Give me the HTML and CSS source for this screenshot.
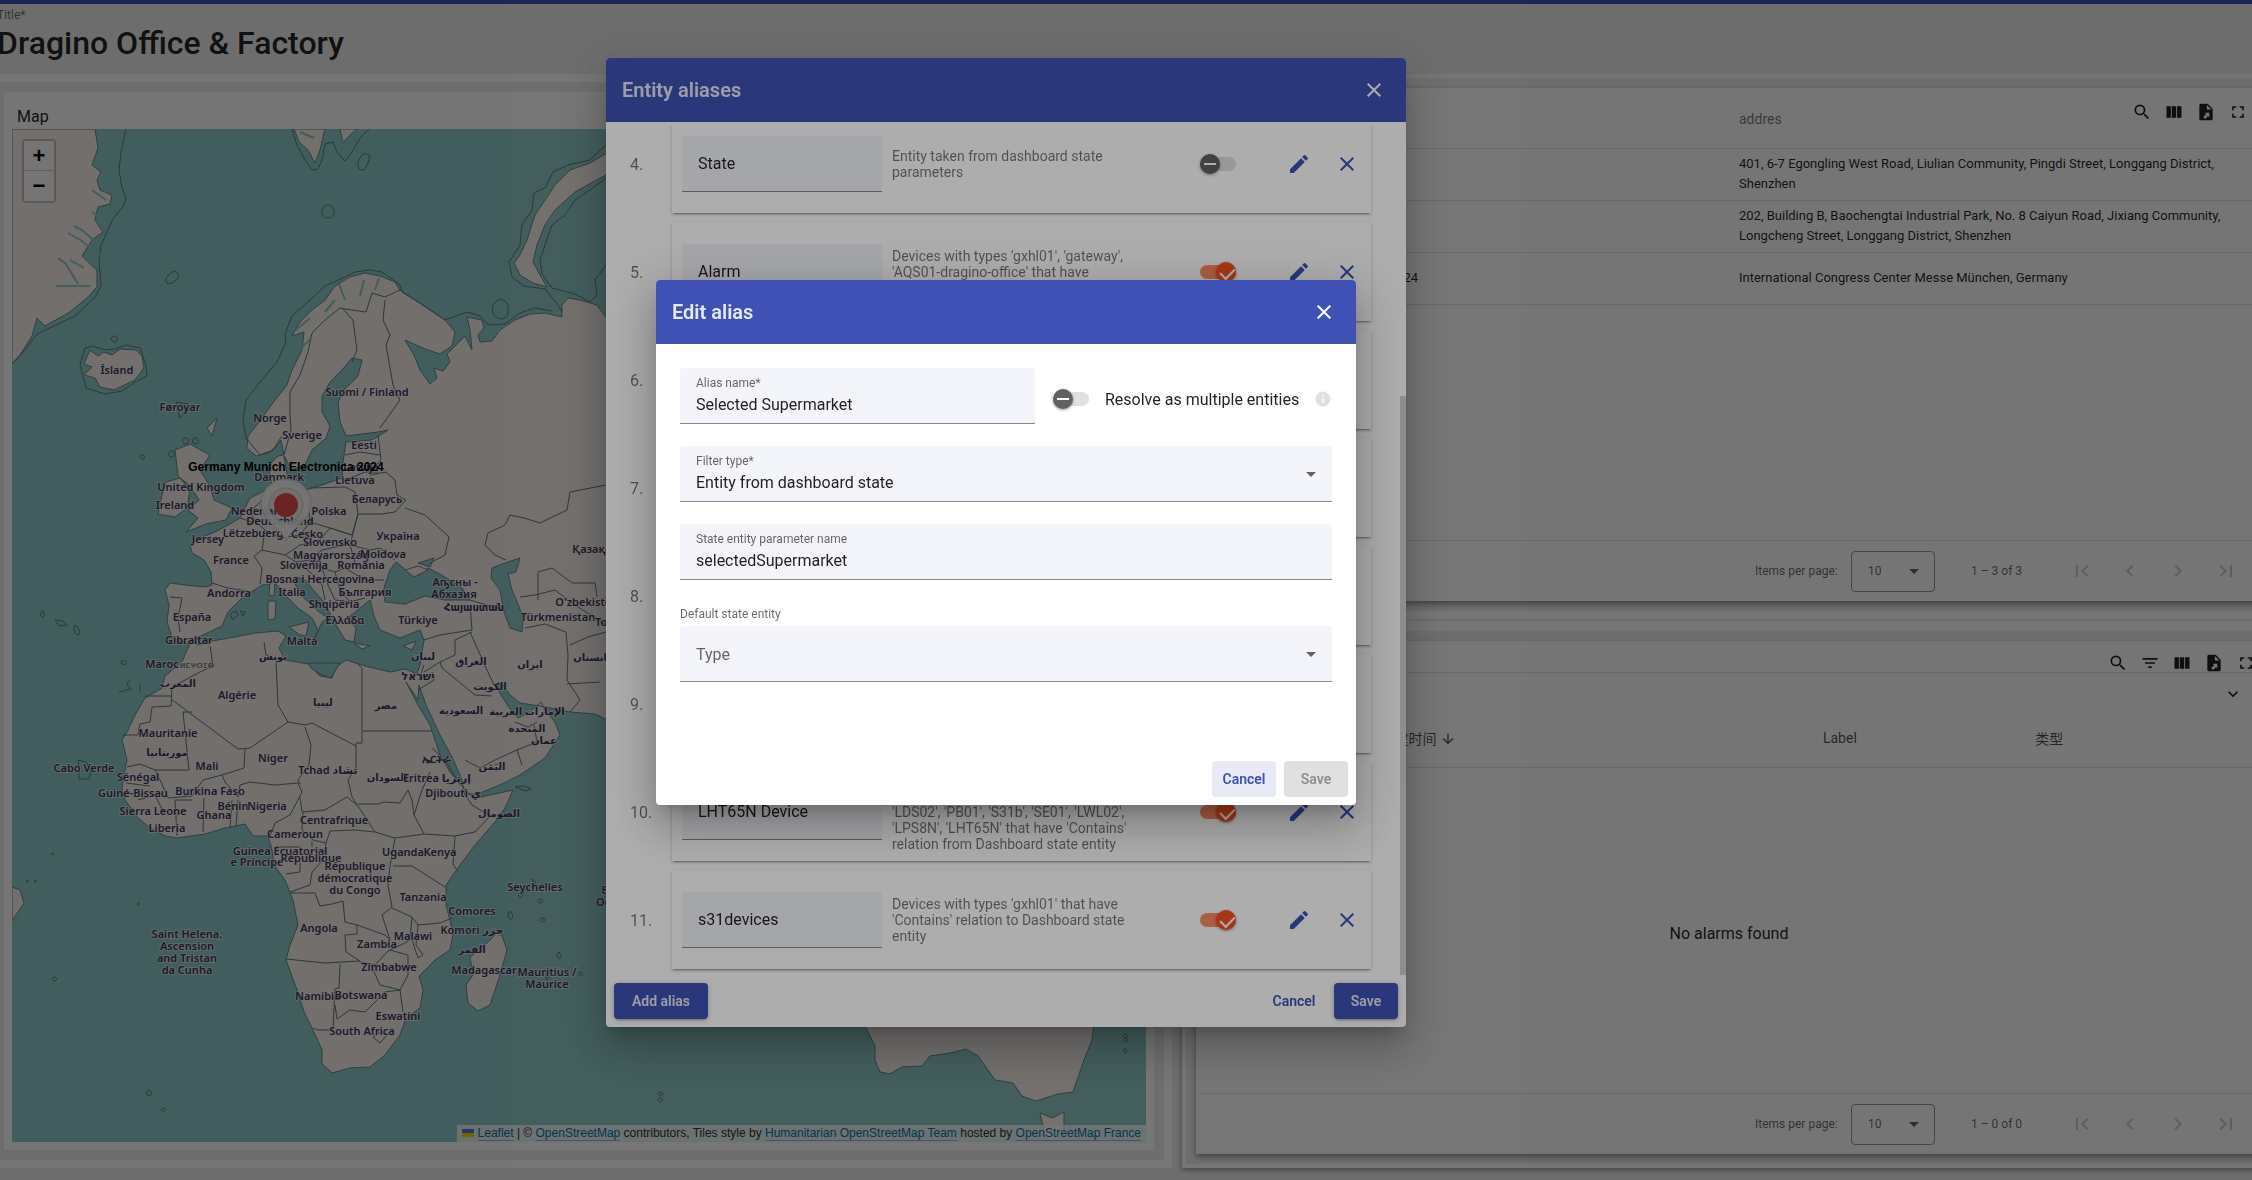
FILE: index.html
```html
<!DOCTYPE html>
<html lang="en">
<head>
<meta charset="utf-8">
<title>Dragino Office &amp; Factory</title>
<link rel="stylesheet" href="styles.css">
</head>
<body>
<svg class="sprite" aria-hidden="true">
  <symbol id="i-close" viewBox="0 0 24 24"><path d="M19 6.41 17.59 5 12 10.59 6.41 5 5 6.41 10.59 12 5 17.59 6.41 19 12 13.41 17.59 19 19 17.59 13.41 12z"/></symbol>
  <symbol id="i-edit" viewBox="0 0 24 24"><path d="M3 17.25V21h3.75L17.81 9.94l-3.75-3.75L3 17.25zM20.71 7.04a1 1 0 0 0 0-1.41l-2.34-2.34a1 1 0 0 0-1.41 0l-1.83 1.83 3.75 3.75 1.83-1.83z"/></symbol>
  <symbol id="i-search" viewBox="0 0 24 24"><path d="M15.5 14h-.79l-.28-.27A6.47 6.47 0 0 0 16 9.5 6.5 6.5 0 1 0 9.5 16c1.61 0 3.09-.59 4.23-1.57l.27.28v.79l5 4.99L20.49 19l-4.99-5zm-6 0a4.5 4.5 0 1 1 0-9 4.5 4.5 0 0 1 0 9z"/></symbol>
  <symbol id="i-columns" viewBox="0 0 24 24"><path d="M3 5h5.3v14H3zM9.3 5h5.3v14H9.3zM15.700 5H21v14h-5.300z"/></symbol>
  <symbol id="i-export" viewBox="0 0 24 24"><path d="M14 2H6c-1.100 0-2 .9-2 2v16c0 1.100.9 2 2 2h12c1.100 0 2-.9 2-2V8l-6-6zm-1 7V3.500L18.500 9H13zm3 9.500-1.600-1.600L11 20.300 8.700 18l3.400-3.400L10.500 13H16v5.500z"/></symbol>
  <symbol id="i-full" viewBox="0 0 24 24"><path d="M7 14H5v5h5v-2H7v-3zm-2-4h2V7h3V5H5v5zm12 7h-3v2h5v-5h-2v3zM14 5v2h3v3h2V5h-5z"/></symbol>
  <symbol id="i-filter" viewBox="0 0 24 24"><path d="M10 18h4v-2h-4v2zM3 6v2h18V6H3zm3 7h12v-2H6v2z"/></symbol>
  <symbol id="i-down" viewBox="0 0 24 24"><path d="M7.41 8.59 12 13.170l4.590-4.580L18 10l-6 6-6-6z"/></symbol>
  <symbol id="i-arrow" viewBox="0 0 24 24"><path d="m20 12-1.410-1.410L13 16.170V4h-2v12.170l-5.580-5.590L4 12l8 8z"/></symbol>
  <symbol id="i-caret" viewBox="0 0 10 5"><path d="M0 0h10L5 5z"/></symbol>
  <symbol id="i-first" viewBox="0 0 24 24"><path d="M18.410 16.590 13.820 12l4.590-4.590L17 6l-6 6 6 6zM6 6h2v12H6z"/></symbol>
  <symbol id="i-prev" viewBox="0 0 24 24"><path d="M15.410 7.410 14 6l-6 6 6 6 1.410-1.410L10.830 12z"/></symbol>
  <symbol id="i-next" viewBox="0 0 24 24"><path d="M10 6 8.590 7.410 13.170 12l-4.580 4.590L10 18l6-6z"/></symbol>
  <symbol id="i-last" viewBox="0 0 24 24"><path d="M5.590 7.410 10.180 12l-4.590 4.590L7 18l6-6-6-6zM16 6h2v12h-2z"/></symbol>
  <symbol id="i-info" viewBox="0 0 24 24"><path d="M12 2a10 10 0 1 0 0 20 10 10 0 0 0 0-20zm1 15h-2v-6h2v6zm0-8h-2V7h2v2z"/></symbol>
</svg>

<header class="page-head">
  <span class="page-hint">Title*</span>
  <h1>Dragino Office &amp; Factory</h1>
</header>

<main class="dashboard">
  <section class="widget widget-map">
    <div class="card map-card">
      <h2>Map</h2>
      <div class="map">
        <svg class="map-canvas" viewBox="12 129 1134 1013" preserveAspectRatio="xMinYMin slice">
          <g class="land">
            <path d="M12 129H95L98 148 92 165 101 172 97 180 100 190 112 195 110 204 98 207 95 220 103 232 92 240 82 256 97 270 97 287 88 297 70 312 45 326 37 318 32 336 20 355 12 364z"/>
            <path d="M294 129 299 142 308 150 315 163 320 150 325 129zM340 129 343 143 350 135 357 129z"/>
            <path d="M84 364 90 350 98 356 104 352 112 355 120 349 136 350 142 356 144 368 135 380 114 390 100 387 95 378 84 375 92 367z"/>
            <path d="M615 148 590 163 570 170 555 185 545 200 535 215 527 240 520 255 514 263 520 275 533 283 547 287 540 275 533 262 537 245 545 225 555 210 575 192 615 170z"/>
            <path d="M615 330 597 305 580 300 568 298 562 305 562 317 545 313 530 314 515 320 500 330 492 341 480 342 478 335 484 328 482 320 467 317 470 330 472 350 465 336 456 345 447 354 450 362 443 371 434 368 437 378 430 384 420 370 414 355 405 340 425 349 440 354 452 346 455 332 445 320 430 310 412 298 400 290 395 282 380 276 365 273 350 277 335 286 325 300 312 310 300 322 292 336 304 332 302 350 292 370 287 385 275 400 262 418 248 436 247 448 256 456 268 453 275 448 281 440 284 455 278 456 268 466 272 485 262 492 250 498 240 518 230 524 215 532 200 538 190 545 192 553 204 560 211 572 212 585 206 587 185 585 170 583 165 590 169 605 167 622 172 637 180 641 190 644 187 650 182 662 165 676 162 688 145 698 135 715 128 730 122 740 127 760 124 775 122 788 125 800 138 818 150 828 165 836 177 838 205 834 225 828 245 824 253 836 268 836 272 850 274 865 285 880 293 900 298 925 290 945 286 960 297 990 304 1012 313 1030 322 1050 322 1064 332 1073 350 1068 370 1067 385 1055 400 1035 406 1018 420 1008 423 990 419 976 435 960 450 950 453 935 450 920 446 905 446 885 460 865 475 845 495 822 505 808 513 790 490 795 475 798 465 790 450 772 440 755 430 725 418 705 406 682 418 700 419 685 426 705 440 735 452 757 462 780 465 795 480 793 500 785 520 775 545 758 560 735 555 722 545 710 541 702 530 712 518 718 508 706 498 690 494 685 502 684 510 695 520 703 540 706 570 712 595 714 615 724z"/>
            <path d="M175 450 190 444 210 455 200 470 210 486 214 500 232 508 226 520 206 524 186 532 198 518 188 510 199 500 190 486 178 476zM162 495 166 482 180 478 190 490 187 508 175 517 158 514zM207 428 217 418 212 436z"/>
            <path d="M500 930 507 950 500 975 490 1005 478 1011 468 1003 466 985 473 975 470 957 485 945zM12 887 20 890 24 903 12 921z"/>
            <path d="M860 1015 867 1030 875 1046 875 1060 880 1072 890 1074 902 1067 922 1066 930 1056 950 1053 966 1049 978 1056 988 1070 995 1080 1013 1083 1022 1096 1036 1101 1058 1094 1073 1092 1084 1060 1092 1040 1095 1015zM1040 1113 1052 1118 1064 1112 1064 1135 1055 1142 1046 1140z"/>
          </g>
          <g class="water">
            <path d="M190 641 205 634 222 626 228 612 242 598 262 585 276 584 284 594 298 608 312 618 318 630 314 640 322 622 328 618 318 611 303 597 295 584 297 577 305 580 315 592 325 603 332 618 338 628 345 640 354 642 356 628 348 618 360 608 370 600 374 616 380 630 400 638 420 630 424 640 420 665 417 674 405 669 390 672 365 666 346 660 335 668 332 678 320 676 308 664 285 660 279 648 286 636 278 631 255 633 235 637 212 641 198 645z"/>
            <path d="M384 588 390 570 396 562 408 572 418 576 428 568 440 574 462 588 470 600 445 600 425 596 405 604 385 602zM418 563 434 558 430 567z"/>
            <path d="M520 558 505 563 492 568 491 578 500 590 504 612 510 628 522 632 523 618 518 604 512 590 508 574 516 572z"/>
            <path d="M284 456 292 470 305 465 312 450 326 438 330 426 322 412 322 396 330 382 342 370 352 358 362 360 358 376 344 390 338 402 340 422 346 436 378 432 388 430 372 440 346 442 343 462 342 478 325 484 305 490 288 480z"/>
            <path d="M308 663H340L334 673 330 678 320 674 312 669z"/>
          </g>
          <g class="land">
            <path d="M268 601 276 601 275 619 268 620zM270 583 275 582 274 596 269 595zM289 627 309 622 306 636 300 635zM354 643 370 646 362 649zM403 646 416 641 412 650zM405 570 418 566 428 570 414 577z"/>
          </g>
          <g class="border">
            <path d="M126 129 121 152 119 170 122 188 126 197 124 205 113 219 101 245 99 260 101 286 95 297 75 316 37 334 24 351 12 364"/>
            <path d="M292 129 297 145 305 160 312 170 318 169 322 160 325 144 333 142 337 152 345 161 352 152 360 138 369 129M363 154q9-1 6 6-4 14-10 9-4-6 4-15zM328 205c8 0 8 13 0 13s-8-13 0-13zM174 271q6 2 4 7-8 9-12 4-2-5 8-11z"/>
            <path d="M80 365 85 348 92 346 105 350 115 349 126 345 140 348 146 365 147 376 135 382 122 391 105 394 86 388zM114 336a3 3 0 1 0 1 0zM176 402 188 404 184 414 180 418z"/>
            <path d="M606 145 590 160 568 165 553 172 545 188 534 193 532 210 522 225 520 245 509 262 512 277 524 286 545 289 558 305 562 312M606 178 590 190 575 200 565 215 552 225 545 245 540 260 542 274 552 288 575 294 590 302 597 295 595 280 606 265M493 305q8-12 15 0 2 14-7 14-11-2-8-14z"/>
            <path d="M246 400 243 420 246 438 260 455 273 450 282 436M246 400 260 382 277 362 286 342 285 334 292 316 310 300 325 286 345 277 355 272 370 270 382 272 400 285 402 292 420 303 445 320 467 312 480 316 488 325 505 324 520 313 535 308 552 311"/>
            <path d="M400 290 385 297 372 293 366 312 345 309 340 308 325 320 312 333 308 352 300 375 290 392 290 415 291 430 284 455M342 308 353 320 357 350 352 362M385 300 383 320 390 335 386 345 393 385 400 400 380 428"/>
            <path d="M345 455 360 452 380 455M378 435 381 460 370 472 352 466M346 480 365 472 378 472M370 475 386 472 395 480 397 495 406 500 395 512 382 514 358 514M310 488 345 487 355 492 358 514 352 535 330 528 310 522 308 500M358 514 350 545 370 550 380 548 395 560M405 508 425 515 436 525 449 537 445 555 430 563M606 485 570 492 567 510 540 523 524 518 510 515 505 525 488 533 485 545 495 555 506 560"/>
            <path d="M262 500 250 512 256 522 265 530 262 550 254 556 262 568 260 584M240 518 252 522M265 530 280 538 300 535 310 522M262 550 285 555 300 545 320 540 330 528 352 535M285 555 296 562 310 560 322 550 345 545M296 562 310 572 322 585 325 600M310 560 322 568 335 572 345 568 365 580 384 580M322 568 328 585 335 600 350 602 365 598M335 572 340 590 350 602M350 545 355 562 345 568M212 583 228 588 247 591M170 597 182 598 178 618 180 632"/>
            <path d="M462 590 470 600 490 606 505 610M470 605 472 630 440 635 424 640M470 632 478 650 486 668 494 685M472 632 455 640 455 655 440 662 424 672M440 662 442 668 475 695 492 696M419 680 424 665M418 690 434 680 432 672M465 760 480 768 495 760 517 750 537 742 534 725M517 750 522 765M515 722 528 727 537 722M538 600 538 572 552 568 572 583 595 583 597 597M520 597 535 595 555 590 575 605 606 625M525 628 545 624 566 632 568 655 567 680 580 700 570 712M567 684 600 682M570 645 588 637 606 632"/>
            <path d="M210 646 213 666 200 672 172 687 171 706 152 707 150 722 140 724 138 735H122M145 696H171M171 699 238 749 250 748 288 722 278 705 276 660 266 655 264 642M192 712H183L189 770H155L140 764 127 767M288 722 305 725 312 723 356 746V743H362V668L358 664M363 731H432M305 727 311 745 309 765 298 780 300 784M245 749 244 768 222 775 203 780 192 796 168 798 162 784 155 770M126 783 150 786M138 800 155 795 165 815"/>
            <path d="M356 746 356 768 348 780 352 797 358 806M222 775 225 782 238 797 240 785 250 782 275 785 298 783 302 792 290 815 275 823 270 836M232 800 230 828M238 800 236 826M204 798 203 832M192 800 175 800 177 836M300 797 302 812 325 810 347 797 358 806 375 832 355 830 330 831 326 843 313 840 302 830 303 812M358 804H378L384 802 400 803 408 790 412 800 414 815 424 834 395 838 375 832M430 772 422 790 414 815M462 790 472 805 490 816 475 832 455 836 424 834M455 836 453 864 458 872M393 866H412L445 887M395 838 390 866M432 748 445 760 460 785"/>
            <path d="M275 847H300M312 841V847M326 843 323 860 312 872 310 885 290 892M300 862 300 872 286 874M290 893H315L320 906 332 904 343 901 345 922 357 925 385 935 390 940 382 915 392 907 388 885 390 866M286 959 325 963 360 961 346 952 345 935 357 934V925M360 962 375 965 388 951 405 943 410 940 412 917 392 908M418 925 440 923 452 918M412 917 418 925 416 945 423 955 418 958 412 940M340 964 339 988 335 989 333 1030 318 1030 313 1028M335 1005 337 1019 350 1010 365 1012 385 992 400 990 403 1012M370 963 380 985 400 990 408 975 408 955 390 950M373 1037 380 1043 387 1035 380 1032z"/>
            <path d="M43 611q3 6-1 6-3-4 1-6zM55 620l8 1 4 4-8 1zM75 625q8 7 3 10-6-3-3-10zM122 660q8 2 3 5l-4-2zM130 680l-3 4 4 5-12 3M140 684v8M78 760l8 2 5 9-2 8h-10v-12zM148 1090q6 1 2 6-6-1-2-6zM163 1108a2 2 0 1 0 1 0zM52 853a1 1 0 1 0 1 0zM138 903a1 1 0 1 0 1 0zM27 880a1 1 0 1 0 1 0zM35 880a1 1 0 1 0 1 0zM54 977a2 2 0 1 0 1 0zM142 455a2 2 0 1 0 1 0zM185 438a3 3 0 1 0 1 0zM195 438a3 3 0 1 0 1 0zM171 451a3 3 0 1 0 1 0zM510 911q6 8 0 8-4-4 0-8zM532 879q6 4 2 6zM520 893a2 2 0 1 0 1 0zM540 899a2 2 0 1 0 1 0zM542 918a2 2 0 1 0 1 0zM559 952q4 5 0 7-4-3 0-7zM580 972a2 2 0 1 0 1 0zM547 974q4 6-1 5zM515 787l10-1 6 3-6 2zM230 614l6-3 2 4-5 5zM240 611l5 1-2 4z"/>
            <path d="M660 1092a2 2 0 1 0 1 0zM660 1098a2 2 0 1 0 1 0zM1125 1034a2 2 0 1 0 1 0zM1125 1038a2 2 0 1 0 1 0zM1125 1048q4 3 0 5-3-2 0-5z"/>
          </g>
          <path class="inlet" d="M65 360l12-28M78 284l-12-20-8-6M90 286l-20 0-14 0M84 268l-14-8M100 255l-18-14-14-8M98 244l-16-14-8-4M104 220l-12-8M106 200l-14-10M296 330l14-12M310 340l-14 12M325 312l10-12M345 300l-6-16M360 296l4-16M375 290l4-12M300 132l14 6"/>
          <g class="places" text-anchor="middle">
            <text x="117" y="374">Ísland</text><text x="180" y="411">Føroyar</text><text x="270" y="422">Norge</text><text x="302" y="439">Sverige</text><text x="367" y="396">Suomi / Finland</text><text x="364" y="449">Eesti</text><text x="361" y="471">Latvija</text><text x="355" y="484">Lietuva</text><text x="279" y="481">Danmark</text><text x="201" y="491">United Kingdom</text><text x="175" y="509">Ireland</text><text x="377" y="503">Беларусь</text><text x="329" y="515">Polska</text><text x="259" y="515">Nederland</text><text x="280" y="525">Deutschland</text><text x="253" y="537">Lëtzebuerg</text><text x="307" y="538">Česko</text><text x="330" y="546">Slovensko</text><text x="208" y="543">Jersey</text><text x="398" y="540">Україна</text><text x="331" y="559">Magyarország</text><text x="383" y="558">Moldova</text><text x="304" y="569">Slovenija</text><text x="361" y="569">România</text><text x="231" y="564">France</text><text x="320" y="583">Bosna i Hercegovina</text><text x="229" y="597">Andorra</text><text x="292" y="596">Italia</text><text x="365" y="596">България</text><text x="455" y="586">Аҧсны -</text><text x="454" y="598">Абхазия</text><text x="334" y="608">Shqipëria</text><text class="rtl" x="474" y="611">Հայաստան</text><text x="345" y="624">Ελλάδα</text><text x="418" y="624">Türkiye</text><text x="192" y="621">España</text><text x="189" y="644">Gibraltar</text><text x="302" y="645">Malta</text><text x="601" y="553">Қазақстан</text><text x="587" y="606">O'zbekiston</text><text x="558" y="621">Türkmenistan</text><text x="621" y="626">Tojikiston</text>
            <text class="rtl" x="273" y="660">تونس</text><text class="rtl" x="423" y="660">لبنان</text><text class="rtl" x="471" y="665">العراق</text><text class="rtl" x="530" y="668">ايران</text><text class="rtl" x="598" y="661">افغانستان</text><text x="418" y="680">ישראל</text><text x="162" y="668">Maroc</text><text class="amazigh" x="197" y="668">ⵍⵎⵖⵔⵉⴱ</text><text class="rtl" x="178" y="687">المغرب</text><text x="237" y="699">Algérie</text><text class="rtl" x="323" y="706">ليبيا</text><text class="rtl" x="386" y="709">مصر</text><text class="rtl" x="490" y="690">الكويت</text><text class="rtl" x="461" y="714">السعودية</text><text class="rtl" x="527" y="715">الإمارات العربية</text><text class="rtl" x="527" y="732">المتحدة</text><text class="rtl" x="544" y="744">عمان</text><text class="rtl" x="492" y="770">اليَمَن</text>
            <text x="168" y="737">Mauritanie</text><text class="rtl" x="167" y="756">موريتانيا</text><text x="207" y="770">Mali</text><text x="273" y="762">Niger</text><text x="328" y="774">Tchad تشاد</text><text class="rtl" x="387" y="781">السودان</text><text x="437" y="782">Eritrea إرتريا</text><text x="436" y="763">ኤርትራ</text><text x="453" y="797">Djibouti ي</text><text x="84" y="772">Cabo Verde</text><text x="138" y="781">Sénégal</text><text x="133" y="797">Guiné-Bissau</text><text x="210" y="795">Burkina Faso</text><text x="233" y="810">Bénin</text><text x="267" y="810">Nigeria</text><text x="214" y="819">Ghana</text><text x="153" y="815">Sierra Leone</text><text x="167" y="832">Liberia</text><text x="334" y="824">Centrafrique</text><text x="295" y="838">Cameroun</text><text class="rtl" x="499" y="817">الصومال</text>
            <text x="280" y="855">Guinea Ecuatorial</text><text x="257" y="866">e Príncipe</text><text x="311" y="862">République</text><text x="403" y="856">Uganda</text><text x="440" y="856">Kenya</text><text x="355" y="870">République</text><text x="355" y="882">démocratique</text><text x="355" y="894">du Congo</text><text x="423" y="901">Tanzania</text><text x="535" y="891">Seychelles</text><text x="619" y="894">British</text><text x="613" y="906">Ocean</text><text x="472" y="915">Comores</text><text x="472" y="934">Komori جزر</text><text class="rtl" x="472" y="953">القمر</text><text x="319" y="932">Angola</text><text x="413" y="940">Malawi</text><text x="377" y="948">Zambia</text><text x="389" y="971">Zimbabwe</text><text x="484" y="974">Madagascar</text><text x="547" y="976">Mauritius /</text><text x="547" y="988">Maurice</text><text x="318" y="1000">Namibia</text><text x="361" y="999">Botswana</text><text x="398" y="1020">Eswatini</text><text x="362" y="1035">South Africa</text><text x="187" y="938">Saint Helena,</text><text x="187" y="950">Ascension</text><text x="187" y="962">and Tristan</text><text x="187" y="974">da Cunha</text>
          </g>
          <g class="pin">
            <path fill-rule="evenodd" d="M286 541c-4-12-25-20-25-37a25 25 0 0 1 50 0c0 17-21 25-25 37zM286 488a17 17 0 1 0 0 34 17 17 0 0 0 0-34z"/>
            <circle cx="286" cy="505" r="12"/>
            <text x="286" y="471" text-anchor="middle">Germany Munich Electronica 2024</text>
          </g>
        </svg>
        <div class="zoom">
          <button type="button" aria-label="Zoom in">+</button>
          <button type="button" aria-label="Zoom out">−</button>
        </div>
        <div class="credit"><svg width="12" height="8" aria-hidden="true"><path fill="#4C7BE1" d="M0 0h12v4H0z"/><path fill="#FFD500" d="M0 4h12v4H0z"/></svg> <a href="#leaflet">Leaflet</a> | © <a href="#osm">OpenStreetMap</a> contributors, Tiles style by <a href="#hot">Humanitarian OpenStreetMap Team</a> hosted by <a href="#osmfr">OpenStreetMap France</a></div>
      </div>
    </div>
  </section>

  <div class="column">
    <section class="widget widget-entities">
      <div class="card table-card">
        <div class="tools">
          <button type="button" aria-label="Search"><svg><use href="#i-search"/></svg></button>
          <button type="button" aria-label="Columns"><svg><use href="#i-columns"/></svg></button>
          <button type="button" aria-label="Export"><svg><use href="#i-export"/></svg></button>
          <button type="button" aria-label="Fullscreen"><svg><use href="#i-full"/></svg></button>
        </div>
        <div class="table-body">
          <table class="entities">
            <thead><tr><th class="c-name"></th><th>addres</th></tr></thead>
            <tbody>
              <tr><td></td><td>401, 6-7 Egongling West Road, Liulian Community, Pingdi Street, Longgang District,<br>Shenzhen</td></tr>
              <tr><td></td><td>202, Building B, Baochengtai Industrial Park, No. 8 Caiyun Road, Jixiang Community,<br>Longcheng Street, Longgang District, Shenzhen</td></tr>
              <tr><td>Germany Munich Electronica 2024</td><td>International Congress Center Messe München, Germany</td></tr>
            </tbody>
          </table>
        </div>
        <div class="pager">
          <label for="size-a">Items per page:</label>
          <span class="pager-size"><select id="size-a"><option>10</option></select><svg class="caret"><use href="#i-caret"/></svg></span>
          <span class="range">1 – 3 of 3</span>
          <button type="button" disabled aria-label="First page"><svg><use href="#i-first"/></svg></button>
          <button type="button" disabled aria-label="Previous page"><svg><use href="#i-prev"/></svg></button>
          <button type="button" disabled aria-label="Next page"><svg><use href="#i-next"/></svg></button>
          <button type="button" disabled aria-label="Last page"><svg><use href="#i-last"/></svg></button>
        </div>
      </div>
    </section>

    <section class="widget widget-alarms">
      <div class="card table-card">
        <div class="tools tools-row">
          <button type="button" aria-label="Search"><svg><use href="#i-search"/></svg></button>
          <button type="button" aria-label="Filter"><svg><use href="#i-filter"/></svg></button>
          <button type="button" aria-label="Columns"><svg><use href="#i-columns"/></svg></button>
          <button type="button" aria-label="Export"><svg><use href="#i-export"/></svg></button>
          <button type="button" aria-label="Fullscreen"><svg><use href="#i-full"/></svg></button>
        </div>
        <div class="tabs-row"><button type="button" aria-label="Expand"><svg><use href="#i-down"/></svg></button></div>
        <table class="alarms">
          <thead><tr><th class="c-check"></th><th class="c-time">创建时间 <svg><use href="#i-arrow"/></svg></th><th class="c-label">Label</th><th class="c-type">类型</th></tr></thead>
        </table>
        <p class="empty">No alarms found</p>
        <div class="pager">
          <label for="size-b">Items per page:</label>
          <span class="pager-size"><select id="size-b"><option>10</option></select><svg class="caret"><use href="#i-caret"/></svg></span>
          <span class="range">1 – 0 of 0</span>
          <button type="button" disabled aria-label="First page"><svg><use href="#i-first"/></svg></button>
          <button type="button" disabled aria-label="Previous page"><svg><use href="#i-prev"/></svg></button>
          <button type="button" disabled aria-label="Next page"><svg><use href="#i-next"/></svg></button>
          <button type="button" disabled aria-label="Last page"><svg><use href="#i-last"/></svg></button>
        </div>
      </div>
    </section>
  </div>
</main>

<div class="backdrop">
  <div class="dialog dialog-list" role="dialog" aria-label="Entity aliases">
    <div class="dialog-head"><h2>Entity aliases</h2><button type="button" aria-label="Close"><svg><use href="#i-close"/></svg></button></div>
    <div class="alias-scroll">
      <div class="alias"><span class="num">4.</span><div class="alias-card"><input type="text" value="State" aria-label="Alias 4"><p>Entity taken from dashboard state<br>parameters</p><input type="checkbox" class="switch" aria-label="Multiple 4"><button type="button" aria-label="Edit"><svg><use href="#i-edit"/></svg></button><button type="button" aria-label="Remove"><svg><use href="#i-close"/></svg></button></div></div>
      <div class="alias"><span class="num">5.</span><div class="alias-card"><input type="text" value="Alarm" aria-label="Alias 5"><p>Devices with types 'gxhl01', 'gateway',<br>'AQS01-dragino-office' that have<br>'Contains' relation</p><input type="checkbox" class="switch" checked aria-label="Multiple 5"><button type="button" aria-label="Edit"><svg><use href="#i-edit"/></svg></button><button type="button" aria-label="Remove"><svg><use href="#i-close"/></svg></button></div></div>
      <div class="alias"><span class="num">6.</span><div class="alias-card"></div></div>
      <div class="alias"><span class="num">7.</span><div class="alias-card"></div></div>
      <div class="alias"><span class="num">8.</span><div class="alias-card"></div></div>
      <div class="alias"><span class="num">9.</span><div class="alias-card"></div></div>
      <div class="alias"><span class="num">10.</span><div class="alias-card"><input type="text" value="LHT65N Device" aria-label="Alias 10"><p>Devices with types 'gxhl01',<br>'gateway', 'LT-22222-L',<br>'LDS02', 'PB01', 'S31b', 'SE01', 'LWL02',<br>'LPS8N', 'LHT65N' that have 'Contains'<br>relation from Dashboard state entity</p><input type="checkbox" class="switch" checked aria-label="Multiple 10"><button type="button" aria-label="Edit"><svg><use href="#i-edit"/></svg></button><button type="button" aria-label="Remove"><svg><use href="#i-close"/></svg></button></div></div>
      <div class="alias"><span class="num">11.</span><div class="alias-card"><input type="text" value="s31devices" aria-label="Alias 11"><p>Devices with types 'gxhl01' that have<br>'Contains' relation to Dashboard state<br>entity</p><input type="checkbox" class="switch" checked aria-label="Multiple 11"><button type="button" aria-label="Edit"><svg><use href="#i-edit"/></svg></button><button type="button" aria-label="Remove"><svg><use href="#i-close"/></svg></button></div></div>
      <div class="thumb"></div>
    </div>
    <div class="dialog-foot">
      <button type="button" class="btn btn-fill btn-start">Add alias</button>
      <button type="button" class="btn btn-text">Cancel</button>
      <button type="button" class="btn btn-fill">Save</button>
    </div>
  </div>
</div>

<div class="backdrop">
  <form class="dialog dialog-edit" role="dialog" aria-label="Edit alias">
    <div class="dialog-head"><h2>Edit alias</h2><button type="button" aria-label="Close"><svg><use href="#i-close"/></svg></button></div>
    <div class="fields">
      <div class="field-row">
        <div class="field"><label for="alias">Alias name*</label><input id="alias" type="text" value="Selected Supermarket"></div>
        <div class="resolve"><input type="checkbox" class="switch" id="multi"><label for="multi">Resolve as multiple entities</label><svg><use href="#i-info"/></svg></div>
      </div>
      <div class="field"><label for="filter">Filter type*</label><select id="filter"><option>Entity from dashboard state</option></select><svg class="caret"><use href="#i-caret"/></svg></div>
      <div class="field"><label for="param">State entity parameter name</label><input id="param" type="text" value="selectedSupermarket"></div>
      <div class="group">
        <label class="caption" for="type">Default state entity</label>
        <div class="field field-empty"><select id="type"><option>Type</option></select><svg class="caret"><use href="#i-caret"/></svg></div>
      </div>
    </div>
    <div class="dialog-foot">
      <button type="button" class="btn btn-text btn-focus">Cancel</button>
      <button type="submit" class="btn btn-off" disabled>Save</button>
    </div>
  </form>
</div>
</body>
</html>
```

FILE: styles.css
```css
* { box-sizing: border-box; }

html, body { height: 100%; }

body {
  margin: 0;
  background: #eee;
  color: rgba(0, 0, 0, .87);
  font-family: Roboto, "Noto Sans CJK SC", sans-serif;
  font-size: 14px;
  overflow: hidden;
}

h1, h2, p { margin: 0; }

button, input, select {
  font: inherit;
  color: inherit;
  border: 0;
  background: none;
  padding: 0;
  margin: 0;
  outline: none;
  appearance: none;
}

svg { fill: currentColor; }
.sprite { display: none; }

/* page header */
.page-head {
  height: 74px;
  margin-left: -3px;
  border-top: 4px solid #3f51b5;
}
.page-hint {
  display: block;
  padding-top: 3px;
  font-size: 12px;
  line-height: 16px;
  color: rgba(0, 0, 0, .54);
}
.page-head h1 {
  font-size: 32px;
  font-weight: 500;
  line-height: 40px;
}

/* dashboard grid */
.dashboard {
  display: grid;
  grid-template-columns: 1186fr 1094fr;
  column-gap: 10px;
  height: calc(100vh - 86px);
  margin: 0 -24px 0 -14px;
}
.column {
  display: grid;
  grid-template-rows: 1fr 1fr;
  min-height: 0;
}
.widget {
  min-height: 0;
  min-width: 0;
  padding: 10px;
  border: 4px solid #fff;
  background: #eee;
}
.widget-map { border-width: 8px; }
.widget-entities { border-bottom-width: 10px; }
.widget-alarms {
  border-top-width: 10px;
  box-shadow: 0 2px 6px rgba(0, 0, 0, .4);
}
.card {
  position: relative;
  display: flex;
  flex-direction: column;
  height: 100%;
  background: #fff;
}
.table-card {
  padding-left: 4px;
  box-shadow: 0 3px 6px rgba(0, 0, 0, .4);
}

/* map */
.map-card { padding: 0 8px 8px; }
.map-card h2 {
  padding: 13px 5px 0;
  height: 37px;
  font-size: 16px;
  font-weight: 400;
  line-height: 24px;
}
.map {
  position: relative;
  flex: 1;
  min-height: 0;
  overflow: hidden;
  background: #91cbca;
}
.map-canvas {
  display: block;
  width: 100%;
  height: 100%;
}
.land { fill: #f8f2ee; stroke: #628a8c; stroke-width: 1; stroke-linejoin: round; }
.water { fill: #91cbca; stroke: #628a8c; stroke-width: 1; stroke-linejoin: round; }
.border { fill: none; stroke: #5c7c80; stroke-width: 1; stroke-linejoin: round; }
.inlet { fill: none; stroke: #91cbca; stroke-width: 2; }
.places {
  font: 600 11px "Noto Sans", "DejaVu Sans", sans-serif;
  fill: #44355c;
  stroke: rgba(255, 255, 255, .5);
  stroke-width: 2px;
  paint-order: stroke;
}
.places .rtl { font-size: 10px; }
.places .amazigh { font-size: 7px; fill: #888; }
.pin path { fill: rgba(255, 255, 255, .85); stroke: #d5d5d5; }
.pin circle { fill: #ec4e4e; }
.pin text { font: 700 12px "Liberation Sans", sans-serif; fill: #000; }
.zoom {
  position: absolute;
  top: 10px;
  left: 10px;
  display: grid;
  border: 2px solid rgba(0, 0, 0, .2);
  border-radius: 4px;
}
.zoom button {
  width: 30px;
  height: 30px;
  background: #fff;
  color: #000;
  font: 700 22px/30px "Liberation Sans", sans-serif;
}
.zoom button:first-child { border-bottom: 1px solid #ccc; }
.credit {
  position: absolute;
  right: 0;
  bottom: 0;
  padding: 0 5px;
  background: rgba(255, 255, 255, .8);
  color: #333;
  font: 12px/17px "Liberation Sans", sans-serif;
}
.credit a {
  color: #0078a8;
  text-decoration: none;
  border-bottom: 1px solid rgba(64, 84, 178, .4);
}

/* table widgets */
.tools {
  position: absolute;
  top: 8px;
  right: 8px;
  display: flex;
}
.tools-row {
  position: static;
  justify-content: flex-end;
  height: 32px;
  padding-top: 6px;
  border-bottom: 1px solid #e0e0e0;
}
.tools button {
  width: 32px;
  height: 32px;
}
.tools svg, .tabs-row svg { display: block; width: 20px; height: 20px; margin: 0 auto; }
.table-body { flex: 1; min-height: 0; }
table {
  width: 100%;
  border-collapse: collapse;
  table-layout: fixed;
}
th {
  padding: 0;
  text-align: left;
  font-weight: 400;
  white-space: nowrap;
  border-bottom: 1px solid #e0e0e0;
}
.entities th { height: 60px; padding: 2px 0 0 8px; color: rgba(0, 0, 0, .54); }
.entities .c-name { width: 50%; }
.entities td {
  height: 52px;
  padding: 0 0 0 8px;
  font-size: 13px;
  line-height: 20px;
  white-space: nowrap;
  border-bottom: 1px solid #e0e0e0;
}
.entities td:first-child { padding-left: 20px; }
.tabs-row {
  display: flex;
  justify-content: flex-end;
  height: 41px;
  padding-right: 19px;
}
.alarms th { height: 53px; padding-bottom: 4px; font-size: 14px; color: rgba(0, 0, 0, .7); }
.alarms svg { width: 16px; height: 16px; vertical-align: -3px; }
.c-check { width: 17%; }
.c-time { width: 41%; }
.c-label { width: 20%; }
.alarms .c-label, .alarms .c-type { padding-left: 7px; }
.empty {
  flex: 1;
  display: flex;
  align-items: center;
  justify-content: center;
  padding: 6px 4px 0 0;
  font-size: 16px;
}
.pager {
  display: flex;
  align-items: center;
  justify-content: flex-end;
  height: 61px;
  padding-right: 12px;
  border-top: 1px solid #e0e0e0;
  color: rgba(0, 0, 0, .6);
  font-size: 12px;
}
.pager label { width: 88px; }
.pager-size {
  position: relative;
  width: 84px;
  margin: 0 36px 0 8px;
}
.pager-size select {
  width: 100%;
  height: 41px;
  padding-left: 16px;
  border: 1px solid rgba(0, 0, 0, .4);
  border-radius: 4px;
}
.caret {
  position: absolute;
  top: calc(50% - 2px);
  right: 16px;
  width: 10px;
  height: 5px;
  color: rgba(0, 0, 0, .6);
  pointer-events: none;
}
.range { width: 87px; }
.pager button { width: 48px; height: 48px; color: rgba(0, 0, 0, .2); }
.pager button svg { width: 24px; height: 24px; vertical-align: middle; }

/* dialogs */
.backdrop {
  position: fixed;
  inset: 0;
  display: flex;
  align-items: center;
  justify-content: center;
  padding: 0 240px 95px 0;
  background: rgba(0, 0, 0, .32);
}
.dialog {
  display: flex;
  flex-direction: column;
  overflow: hidden;
  background: #fff;
  border-radius: 4px;
  box-shadow: 0 11px 15px -7px rgba(0, 0, 0, .2), 0 24px 38px 3px rgba(0, 0, 0, .14), 0 9px 46px 8px rgba(0, 0, 0, .12);
}
.dialog-list { width: 800px; height: calc(100vh - 211px); }
.dialog-edit { width: 700px; }
.dialog-head {
  display: flex;
  align-items: center;
  justify-content: space-between;
  flex: none;
  height: 64px;
  padding: 0 20px 0 16px;
  background: #3f51b5;
  color: #fff;
}
.dialog-head h2 { font-size: 20px; font-weight: 600; opacity: .87; }
.dialog-head button, .dialog-head svg { display: block; width: 24px; height: 24px; }
.dialog-foot {
  display: flex;
  justify-content: flex-end;
  gap: 8px;
  padding: 8px;
}
.btn {
  min-width: 64px;
  height: 36px;
  padding: 0 16px;
  border-radius: 4px;
  font-weight: 600;
  line-height: 36px;
}
.btn-start { min-width: 94px; margin-right: auto; }
.btn-fill {
  background: #3f51b5;
  color: rgba(255, 255, 255, .87);
  box-shadow: 0 3px 2px -2px rgba(0, 0, 0, .2), 0 1px 5px rgba(0, 0, 0, .25);
}
.btn-text { padding: 0 8px; color: #3f51b5; }
.btn-focus { background: #e8eaf6; }
.btn-off { background: #e0e0e0; color: rgba(0, 0, 0, .38); }

/* alias list */
.alias-scroll {
  position: relative;
  flex: 1;
  min-height: 0;
  display: flex;
  flex-direction: column;
  justify-content: flex-end;
  gap: 10px;
  margin-top: 4px;
  padding: 0 35px 6px 24px;
  overflow: hidden;
}
.alias { display: flex; align-items: center; flex: none; }
.num { width: 42px; font-size: 16px; color: rgba(0, 0, 0, .54); }
.alias-card {
  flex: 1;
  display: flex;
  align-items: center;
  height: 98px;
  padding: 0 0 0 10px;
  box-shadow: 0 3px 1px -2px rgba(0, 0, 0, .2), 0 2px 2px rgba(0, 0, 0, .14), 0 1px 5px rgba(0, 0, 0, .12);
}
.alias-card input[type="text"] {
  width: 200px;
  height: 56px;
  padding: 0 16px;
  background: #f4f5fa;
  border-bottom: 1px solid #888;
  border-radius: 4px 4px 0 0;
  font-size: 16px;
}
.alias-card p {
  width: 318px;
  padding-left: 10px;
  line-height: 16px;
  color: rgba(0, 0, 0, .54);
}
.alias-card button {
  width: 48px;
  height: 48px;
  color: #3f51b5;
}
.alias-card .switch + button { margin-left: auto; }
.alias-card button svg { width: 24px; height: 24px; vertical-align: middle; }
.thumb {
  position: absolute;
  top: 270px;
  right: 0;
  bottom: 0;
  width: 6px;
  background: rgba(0, 0, 0, .18);
}

/* toggle switch */
.switch {
  position: relative;
  flex: none;
  width: 36px;
  height: 14px;
  border-radius: 7px;
  background: #e0e0e0;
}
.switch::before {
  content: "";
  position: absolute;
  top: -3px;
  left: 0;
  width: 20px;
  height: 20px;
  border-radius: 50%;
  background: #616161;
  box-shadow: 0 1px 3px rgba(0, 0, 0, .4);
}
.switch::after {
  content: "";
  position: absolute;
  top: 6px;
  left: 4px;
  width: 12px;
  height: 2px;
  background: #fff;
}
.switch:checked { background: #ff8a65; }
.switch:checked::before { left: 16px; background: #f4511e; }
.switch:checked::after {
  top: 0;
  left: 23px;
  width: 7px;
  height: 12px;
  background: none;
  border: solid #fff;
  border-width: 0 2px 2px 0;
  transform: rotate(45deg);
}

/* edit form */
.fields {
  display: flex;
  flex-direction: column;
  gap: 22px;
  padding: 24px 24px 71px;
}
.field-row { display: flex; align-items: center; gap: 18px; }
.field-row .field { flex: 1; }
.field {
  position: relative;
  display: flex;
  flex-direction: column;
  height: 56px;
  padding: 8px 16px 0;
  background: #f4f5fa;
  border-bottom: 1px solid #888;
  border-radius: 4px 4px 0 0;
}
.field label, .caption {
  font-size: 12px;
  line-height: 14px;
  color: rgba(0, 0, 0, .6);
}
.field input, .field select {
  width: 100%;
  height: 24px;
  margin-top: 2px;
  font-size: 16px;
}
.field-empty { padding-top: 14px; }
.field-empty select { color: rgba(0, 0, 0, .6); }
.resolve { display: flex; align-items: center; width: 279px; padding-top: 6px; }
.resolve label { margin-left: 16px; font-size: 16px; }
.resolve svg { width: 18px; height: 18px; margin-left: auto; color: #e0e0e0; }
.group { display: grid; gap: 5px; padding-top: 5px; }
```
